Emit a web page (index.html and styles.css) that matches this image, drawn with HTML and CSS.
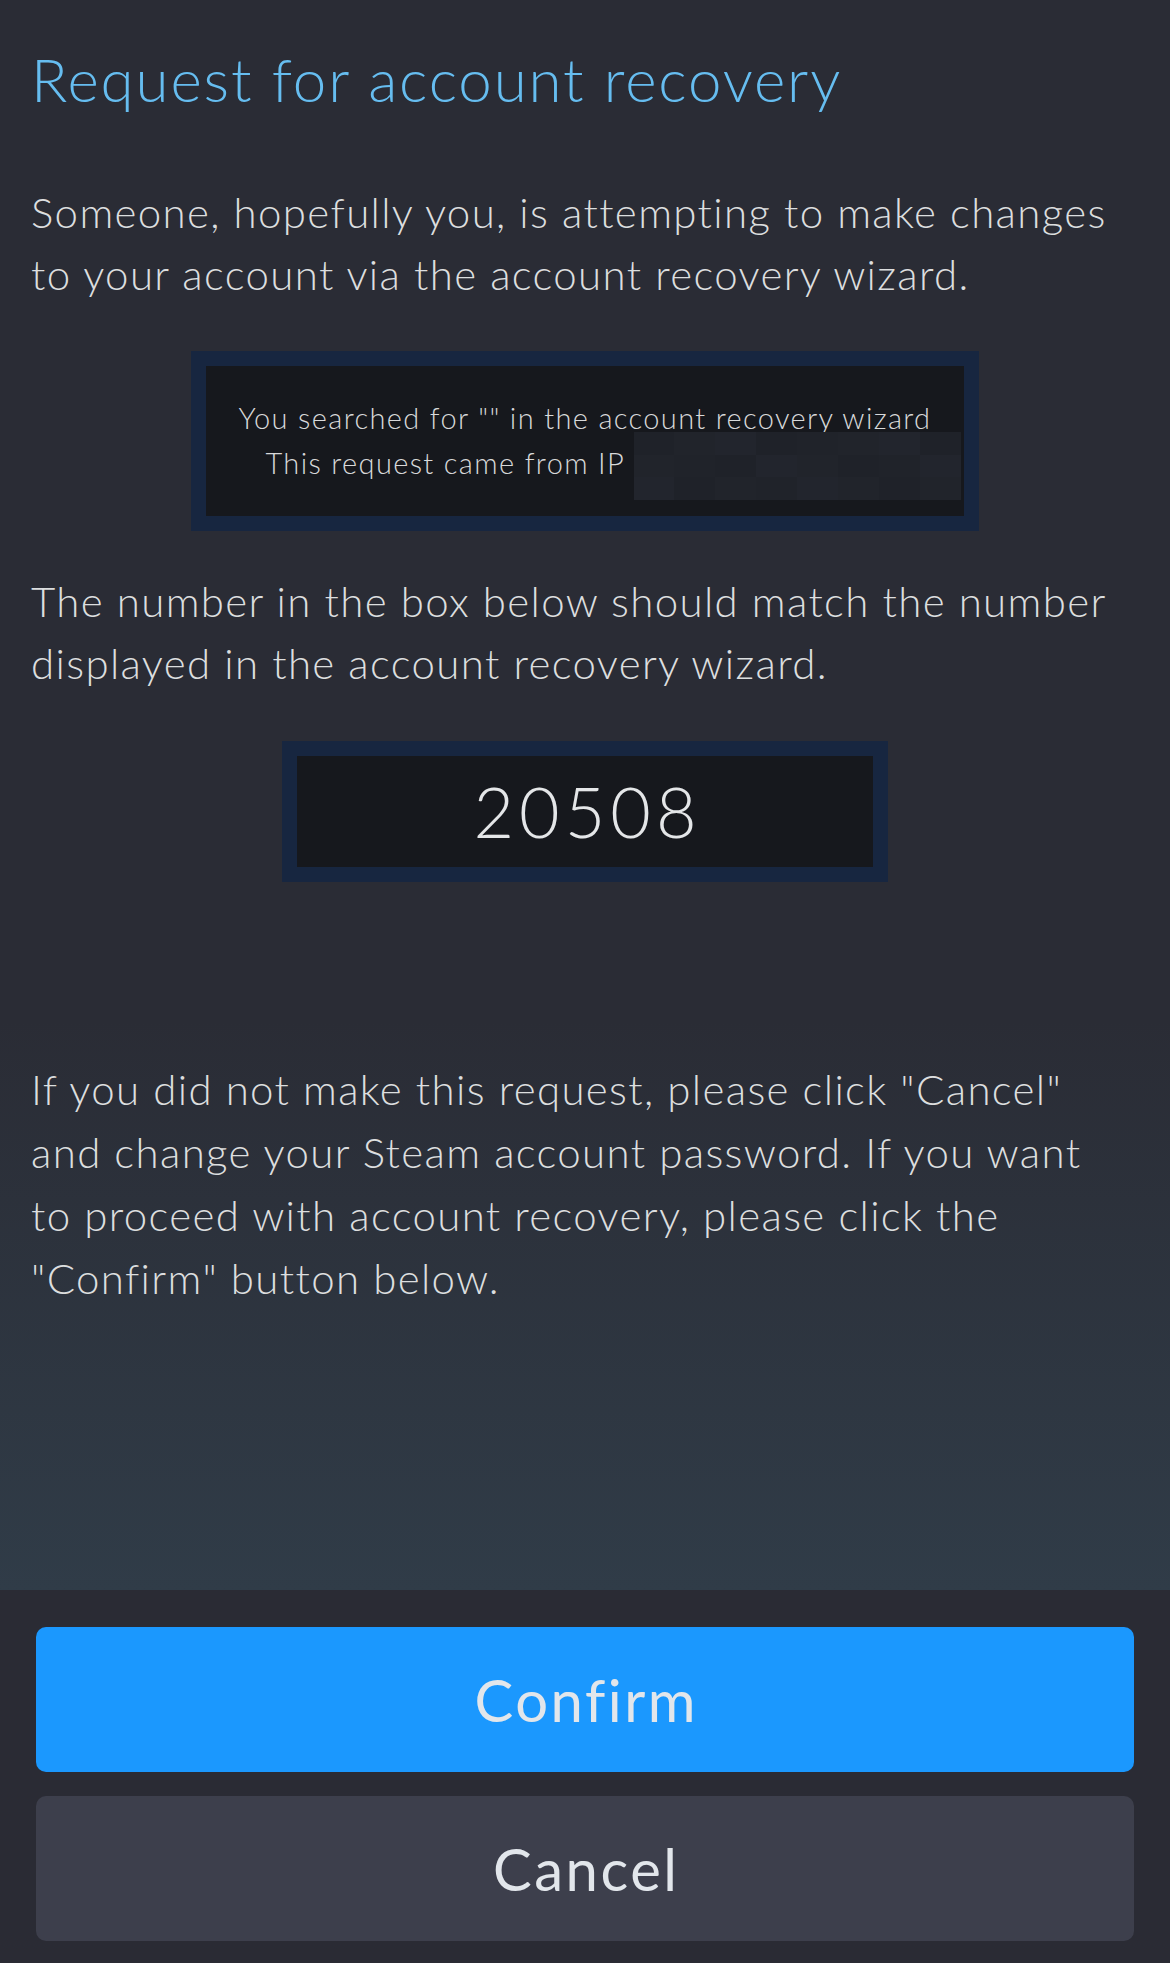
FILE: index.html
```html
<!DOCTYPE html>
<html lang="en">
<head>
<meta charset="utf-8">
<title>Request for account recovery</title>
<link rel="stylesheet" href="styles.css">
</head>
<body>
<main class="main">
  <h1 class="title">Request for account recovery</h1>
  <p class="para para-first">Someone, hopefully you, is attempting to make changes to your account via the account recovery wizard.</p>
  <div class="info-box">
    <div class="info-inner">
      <div class="info-line">You searched for "" in the account recovery wizard</div>
      <div class="info-line">This request came from IP <span class="ip"><span class="mosaic">
        <i class="c1"></i><i class="c2"></i><i class="c3"></i><i class="c1"></i><i class="c4"></i><i class="c2"></i><i class="c3"></i><i class="c1"></i>
        <i class="c2"></i><i class="c4"></i><i class="c1"></i><i class="c3"></i><i class="c2"></i><i class="c1"></i><i class="c4"></i><i class="c3"></i>
        <i class="c3"></i><i class="c1"></i><i class="c2"></i><i class="c4"></i><i class="c3"></i><i class="c2"></i><i class="c1"></i><i class="c2"></i>
      </span></span></div>
    </div>
  </div>
  <p class="para para-second">The number in the box below should match the number displayed in the account recovery wizard.</p>
  <div class="code-box">
    <div class="code-inner">20508</div>
  </div>
  <p class="para para-third">If you did not make this request, please click "Cancel" and change your Steam account password. If you want to proceed with account recovery, please click the "Confirm" button below.</p>
</main>
<footer class="actions">
  <button class="btn btn-confirm" type="button">Confirm</button>
  <button class="btn btn-cancel" type="button">Cancel</button>
</footer>
</body>
</html>
```
FILE: styles.css
```css
* { box-sizing: border-box; }

html, body {
  margin: 0;
  padding: 0;
  background: #2a2b34;
}

body {
  font-family: "Lato", "Open Sans", "Liberation Sans", sans-serif;
  color: #dcdedf;
  width: 1170px;
}

.main {
  height: 1590px;
  padding: 43px 31px 0;
  background: linear-gradient(to bottom, #2a2c35 0px, #2a2c35 1020px, #303c48 1590px);
  display: flex;
  flex-direction: column;
}

.title {
  margin: 0;
  font-size: 60px;
  line-height: 72px;
  font-weight: 300;
  color: #66bdf0;
  letter-spacing: 1.9px;
}

.para {
  margin: 0;
  max-width: 1094px;
  font-size: 42px;
  line-height: 62px;
  font-weight: 300;
  color: #dcdedf;
  letter-spacing: 1.35px;
}

.para-first { margin-top: 66px; }
.para-second { margin-top: 39px; }
.para-third { margin-top: 176px; line-height: 63px; }

.info-box {
  margin: 46px auto 0;
  width: 788px;
  height: 180px;
  border: 15px solid #172640;
  background: #16181d;
}

.info-inner {
  padding-top: 29px;
  text-align: center;
  font-size: 29px;
  line-height: 45px;
  font-weight: 300;
  color: #d8d9da;
  letter-spacing: 1.35px;
}

.ip {
  display: inline-block;
  width: 271px;
  height: 1em;
  position: relative;
  vertical-align: baseline;
}

.mosaic {
  position: absolute;
  left: 0;
  top: -13px;
  width: 327px;
  height: 68px;
  display: grid;
  grid-template-columns: repeat(8, 1fr);
  grid-template-rows: repeat(3, 1fr);
}

.mosaic i { display: block; }
.mosaic .c1 { background: #1f2229; }
.mosaic .c2 { background: #21242b; }
.mosaic .c3 { background: #22252d; }
.mosaic .c4 { background: #20232a; }

.code-box {
  margin: 47px auto 0;
  width: 606px;
  height: 141px;
  border: 15px solid #172640;
  background: #16181d;
}

.code-inner {
  text-align: center;
  font-size: 70px;
  line-height: 111px;
  font-weight: 300;
  color: #e4e6e8;
  letter-spacing: 5px;
  text-indent: 5px;
}

.actions {
  background: #2a2b34;
  padding: 37px 36px 22px;
  display: flex;
  flex-direction: column;
  gap: 24px;
}

.btn {
  display: block;
  width: 100%;
  height: 145px;
  border: 0;
  border-radius: 10px;
  font-family: "Lato", "Open Sans", "Liberation Sans", sans-serif;
  font-size: 58px;
  font-weight: 400;
  line-height: 145px;
  padding: 0;
  color: #e2e6eb;
  letter-spacing: 2.5px;
  text-indent: 2.5px;
}

.btn-confirm { background: #1b98fe; }
.btn-cancel { background: #3d3f4c; }
```
